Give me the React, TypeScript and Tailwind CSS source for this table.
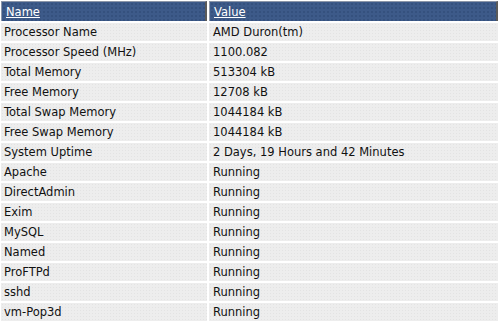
import { Fragment } from "react";

const rows: [string, string][] = [
  ["Processor Name", "AMD Duron(tm)"],
  ["Processor Speed (MHz)", "1100.082"],
  ["Total Memory", "513304 kB"],
  ["Free Memory", "12708 kB"],
  ["Total Swap Memory", "1044184 kB"],
  ["Free Swap Memory", "1044184 kB"],
  ["System Uptime", "2 Days, 19 Hours and 42 Minutes"],
  ["Apache", "Running"],
  ["DirectAdmin", "Running"],
  ["Exim", "Running"],
  ["MySQL", "Running"],
  ["Named", "Running"],
  ["ProFTPd", "Running"],
  ["sshd", "Running"],
  ["vm-Pop3d", "Running"],
];

const head =
  "h-[20px] flex items-center pl-[4px] pt-[2px] bg-[#3d5a89] bg-[image:radial-gradient(#35517e_1px,transparent_1px)] bg-[size:4px_4px] border-t border-l border-[#8c96a8] border-r-2 border-r-[#5a5a5a] text-white underline";
const cell =
  "h-[18px] flex items-center pt-[2px] bg-[#ededed] bg-[image:radial-gradient(#e3e3e3_1px,transparent_1px)] bg-[size:3px_3px] text-[#111]";

export default function App() {
  return (
    <div className="w-[501px] h-[324px] bg-white pt-[1px] pl-[1px] font-['DejaVu_Sans',Verdana,sans-serif] text-[11.5px] leading-none">
      <div className="grid grid-cols-[206px_289px] gap-x-[2px] gap-y-[2px]">
        <div className={head}>Name</div>
        <div className={head}>Value</div>
        {rows.map(([name, value]) => (
          <Fragment key={name}>
            <div className={`${cell} pl-[3px]`}>{name}</div>
            <div className={`${cell} pl-[4px]`}>{value}</div>
          </Fragment>
        ))}
      </div>
    </div>
  );
}
